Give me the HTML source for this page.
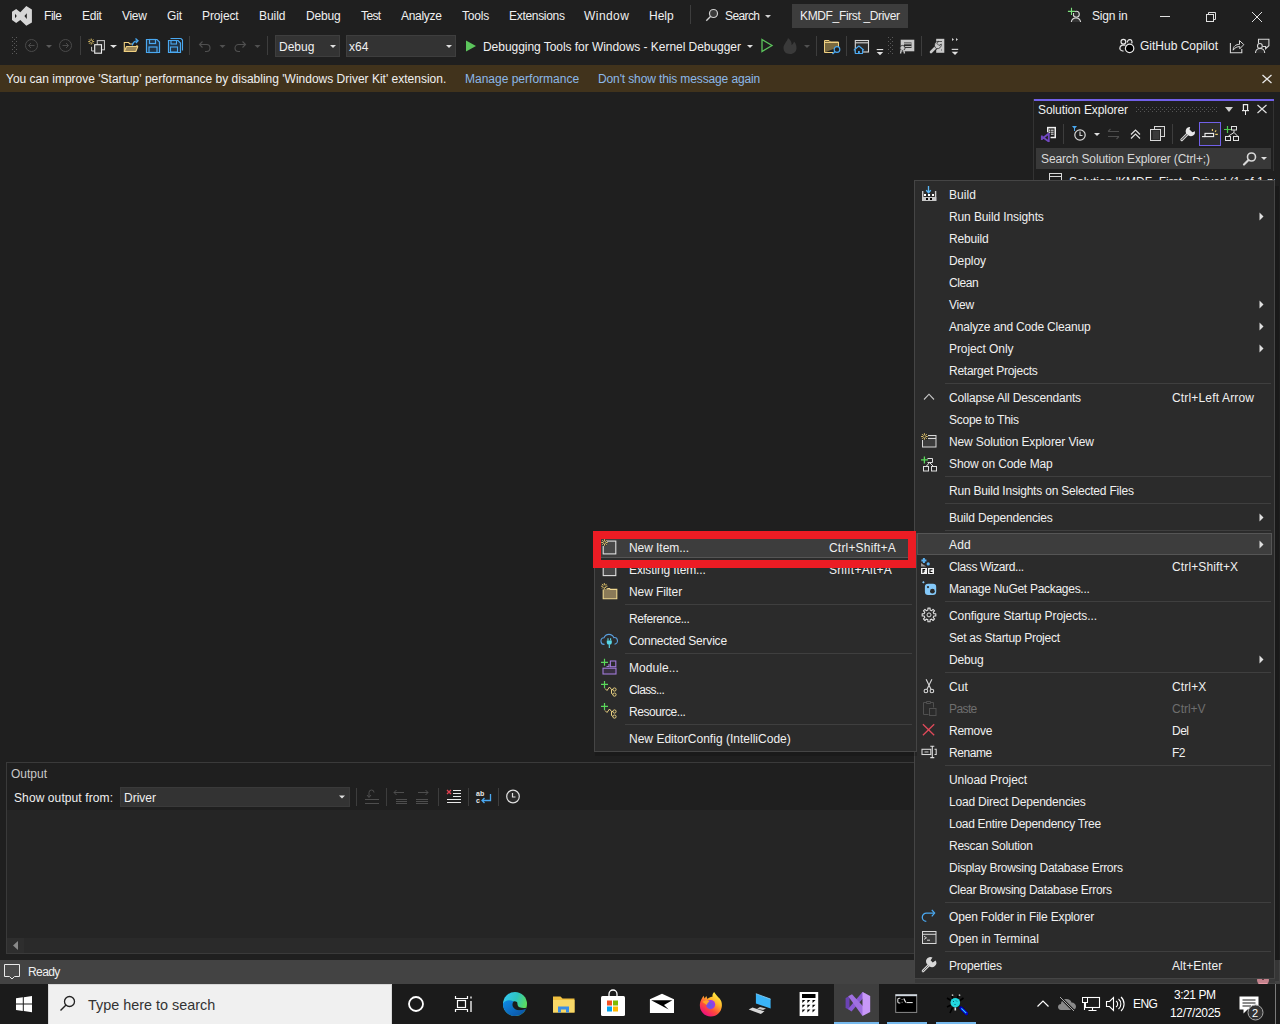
<!DOCTYPE html><html><head><meta charset="utf-8"><style>
*{margin:0;padding:0;box-sizing:border-box}
html,body{width:1280px;height:1024px;overflow:hidden;background:#1f1f1f}
body{position:relative;font-family:"Liberation Sans",sans-serif;font-size:12px;line-height:16px;color:#f0f0f0}
.t{position:absolute;white-space:nowrap;line-height:16px}
.r{position:absolute}
.s{position:absolute;overflow:visible}
</style></head><body><svg class="s" style="left:0px;top:0px;" width="40" height="30" viewBox="0 0 40 30"><path fill="#d6d6d6" fill-rule="evenodd" d="M12 11.7L16.2 9L20.3 12.3L26.3 5.9L31.9 9.4V22.6L26.3 25.8L20.3 19.9L16.2 22.9L12 19.9Z M15 13.8L16.8 16L15 18.2Z M26.8 13.2L24.4 16.1L26.8 19Z"/></svg><div class="t" style="left:44px;top:8px;letter-spacing:-0.448px;">File</div><div class="t" style="left:82px;top:8px;letter-spacing:-0.261px;">Edit</div><div class="t" style="left:122px;top:8px;letter-spacing:-0.300px;">View</div><div class="t" style="left:167px;top:8px;letter-spacing:-0.170px;">Git</div><div class="t" style="left:202px;top:8px;letter-spacing:-0.109px;">Project</div><div class="t" style="left:259px;top:8px;letter-spacing:-0.048px;">Build</div><div class="t" style="left:306px;top:8px;letter-spacing:-0.168px;">Debug</div><div class="t" style="left:361px;top:8px;letter-spacing:-0.600px;">Test</div><div class="t" style="left:401px;top:8px;letter-spacing:-0.300px;">Analyze</div><div class="t" style="left:462px;top:8px;letter-spacing:-0.206px;">Tools</div><div class="t" style="left:509px;top:8px;letter-spacing:-0.312px;">Extensions</div><div class="t" style="left:584px;top:8px;letter-spacing:0.442px;">Window</div><div class="t" style="left:649px;top:8px;letter-spacing:-0.029px;">Help</div><div class="r" style="left:690px;top:5px;width:1px;height:19px;background:#3d3d3d;"></div><svg class="s" style="left:700px;top:5px;" width="24" height="20" viewBox="0 0 24 20"><circle cx="13.5" cy="8.5" r="4" fill="#3a3a3a" stroke="#d0d0d0" stroke-width="1.2"/><path d="M10.7 11.3L6.3 15.7" stroke="#d0d0d0" stroke-width="1.4"/></svg><div class="t" style="left:725px;top:8px;letter-spacing:-0.600px;">Search</div><svg class="s" style="left:760px;top:10px;" width="14" height="10" viewBox="0 0 14 10"><path d="M5 5h6l-3 3z" fill="#d0d0d0"/></svg><div class="r" style="left:792px;top:4px;width:116px;height:24px;background:#3d3d3d;"></div><div class="t" style="left:800px;top:8px;letter-spacing:-0.354px;">KMDF_First _Driver</div><svg class="s" style="left:1064px;top:5px;" width="22" height="22" viewBox="0 0 22 22"><circle cx="12.3" cy="9.3" r="3" fill="#333" stroke="#d8d8d8" stroke-width="1.1"/><path d="M7.3 17A4.7 4.7 0 0 1 16.6 17" fill="#333" stroke="#d8d8d8" stroke-width="1.1"/><path d="M7.5 2.8V10M3.9 6.4H11.1" stroke="#1f1f1f" stroke-width="3"/><path d="M7.5 2.8V10M3.9 6.4H11.1" stroke="#7ee07e" stroke-width="1.1"/></svg><div class="t" style="left:1092px;top:8px;letter-spacing:-0.184px;">Sign in</div><div class="r" style="left:1160px;top:16px;width:10px;height:1px;background:#e0e0e0;"></div><svg class="s" style="left:1204px;top:10px;" width="14" height="14" viewBox="0 0 14 14"><rect x="2.5" y="4.5" width="7" height="7" fill="none" stroke="#e0e0e0"/><path d="M4.5 4.5V2.5H11.5V9.5H9.5" fill="none" stroke="#e0e0e0"/></svg><svg class="s" style="left:1250px;top:10px;" width="14" height="14" viewBox="0 0 14 14"><path d="M2 2L12 12M12 2L2 12" stroke="#e0e0e0" stroke-width="1"/></svg><svg class="s" style="left:0px;top:0px;" width="1280" height="64" viewBox="0 0 1280 64"><rect x="12" y="37" width="1" height="1" fill="#5a5a5a"/><rect x="16" y="37" width="1" height="1" fill="#5a5a5a"/><rect x="12" y="41" width="1" height="1" fill="#5a5a5a"/><rect x="16" y="41" width="1" height="1" fill="#5a5a5a"/><rect x="12" y="45" width="1" height="1" fill="#5a5a5a"/><rect x="16" y="45" width="1" height="1" fill="#5a5a5a"/><rect x="12" y="49" width="1" height="1" fill="#5a5a5a"/><rect x="16" y="49" width="1" height="1" fill="#5a5a5a"/><rect x="12" y="53" width="1" height="1" fill="#5a5a5a"/><rect x="16" y="53" width="1" height="1" fill="#5a5a5a"/><rect x="14" y="39" width="1" height="1" fill="#5a5a5a"/><rect x="14" y="43" width="1" height="1" fill="#5a5a5a"/><rect x="14" y="47" width="1" height="1" fill="#5a5a5a"/><rect x="14" y="51" width="1" height="1" fill="#5a5a5a"/></svg><svg class="s" style="left:24px;top:38px;" width="16" height="16" viewBox="0 0 16 16"><circle cx="7.5" cy="7.5" r="6" fill="none" stroke="#4a4a4a" stroke-width="1"/><path d="M10.5 7.5H4.5M7 5L4.5 7.5L7 10" fill="none" stroke="#4a4a4a"/></svg><svg class="s" style="left:44px;top:42px;" width="10" height="8" viewBox="0 0 10 8"><path d="M2 3h6l-3 3z" fill="#5a5a5a"/></svg><svg class="s" style="left:58px;top:38px;" width="16" height="16" viewBox="0 0 16 16"><circle cx="7.5" cy="7.5" r="6" fill="none" stroke="#4a4a4a" stroke-width="1"/><path d="M4.5 7.5H10.5M8 5L10.5 7.5L8 10" fill="none" stroke="#4a4a4a"/></svg><div class="r" style="left:80px;top:36px;width:1px;height:19px;background:#3d3d3d;"></div><svg class="s" style="left:88px;top:37px;" width="18" height="18" viewBox="0 0 18 18"><rect x="9.25" y="3.6" width="7.2" height="9.2" fill="#2a2a2a" stroke="#c8c8c8" stroke-width="1"/><rect x="6.7" y="7.7" width="6.8" height="8.5" fill="#333" stroke="#f0f0f0" stroke-width="1.1"/><path d="M3.6 9.8V14H6" fill="none" stroke="#c8c8c8" stroke-width="1"/><path d="M0.20 4.60L2.15 4.60M4.25 4.60L6.20 4.60M1.08 2.48L2.46 3.86M3.94 5.34L5.32 6.72M3.20 1.60L3.20 3.55M3.20 5.65L3.20 7.60M5.32 2.48L3.94 3.86M2.46 5.34L1.08 6.72" stroke="#f0d070" stroke-width="0.9"/></svg><svg class="s" style="left:108px;top:42px;" width="10" height="8" viewBox="0 0 10 8"><path d="M2 3h7l-3.5 3z" fill="#e0e0e0"/></svg><svg class="s" style="left:123px;top:37px;" width="18" height="17" viewBox="0 0 18 17"><path d="M1.3 14.5V5.5H5.5L7 7H10" fill="none" stroke="#f0d080" stroke-width="1.1"/><path d="M1.3 14.5L3.5 9.5H14.8L12.8 14.5Z" fill="#9a8658" stroke="#f0d080" stroke-width="1.1" stroke-linejoin="round"/><path d="M9.3 8.5C9.8 5.5 11.5 4 14 3.8" fill="none" stroke="#4aa8f0" stroke-width="1.3"/><path d="M12.5 1.5L15 3.8L12.8 6" fill="none" stroke="#4aa8f0" stroke-width="1.3"/><path d="M14 9.5V8" stroke="#f0d080" stroke-width="1.1"/></svg><svg class="s" style="left:145px;top:38px;" width="16" height="16" viewBox="0 0 16 16"><path d="M1.5 1.5H12l2.5 2.5V14.5H1.5Z" fill="#223344" stroke="#4aa8f0" stroke-width="1.2"/><rect x="4.5" y="1.5" width="6" height="4" fill="none" stroke="#4aa8f0" stroke-width="1.2"/><rect x="4" y="9" width="8" height="5.5" fill="none" stroke="#4aa8f0" stroke-width="1.2"/></svg><svg class="s" style="left:167px;top:37px;" width="17" height="17" viewBox="0 0 17 17"><path d="M3.5 1.5H14l1.5 1.5V13.5" fill="none" stroke="#4aa8f0" stroke-width="1.1"/><path d="M1.5 3.5H11l2.5 2.5V15.5H1.5Z" fill="#223344" stroke="#4aa8f0" stroke-width="1.2"/><rect x="4" y="3.5" width="5.5" height="3.5" fill="none" stroke="#4aa8f0" stroke-width="1.1"/><rect x="3.5" y="10" width="7" height="5" fill="none" stroke="#4aa8f0" stroke-width="1.1"/></svg><div class="r" style="left:189px;top:36px;width:1px;height:19px;background:#3d3d3d;"></div><svg class="s" style="left:197px;top:38px;" width="16" height="16" viewBox="0 0 16 16"><path d="M3 6.5h6.5a3.5 3.5 0 0 1 0 7H8" fill="none" stroke="#505050" stroke-width="1.1"/><path d="M5.5 3.5L2.5 6.5L5.5 9.5" fill="none" stroke="#505050" stroke-width="1.1"/><path d="M8 13.5L12 14" stroke="none"/></svg><svg class="s" style="left:217px;top:42px;" width="10" height="8" viewBox="0 0 10 8"><path d="M2.5 3h6l-3 3z" fill="#505050"/></svg><svg class="s" style="left:232px;top:38px;" width="16" height="16" viewBox="0 0 16 16"><path d="M13 6.5H6.5a3.5 3.5 0 0 0 0 7H8" fill="none" stroke="#505050" stroke-width="1.1"/><path d="M10.5 3.5L13.5 6.5L10.5 9.5" fill="none" stroke="#505050" stroke-width="1.1"/></svg><svg class="s" style="left:252px;top:42px;" width="10" height="8" viewBox="0 0 10 8"><path d="M2.5 3h6l-3 3z" fill="#505050"/></svg><div class="r" style="left:267px;top:36px;width:1px;height:19px;background:#3d3d3d;"></div><div class="r" style="left:275px;top:35px;width:65px;height:22px;background:#333333;border:1px solid #3e3e3e"></div><div class="t" style="left:279px;top:39px;">Debug</div><svg class="s" style="left:326px;top:42px;" width="12" height="8" viewBox="0 0 12 8"><path d="M4 3h6l-3 3z" fill="#e0e0e0"/></svg><div class="r" style="left:346px;top:35px;width:110px;height:22px;background:#333333;border:1px solid #3e3e3e"></div><div class="t" style="left:349px;top:39px;">x64</div><svg class="s" style="left:442px;top:42px;" width="12" height="8" viewBox="0 0 12 8"><path d="M4 3h6l-3 3z" fill="#e0e0e0"/></svg><svg class="s" style="left:464px;top:39px;" width="14" height="14" viewBox="0 0 14 14"><path d="M2 1.5L12 7L2 12.5Z" fill="#5cc55c"/></svg><div class="t" style="left:483px;top:39px;letter-spacing:-0.045px;">Debugging Tools for Windows - Kernel Debugger</div><svg class="s" style="left:744px;top:42px;" width="12" height="8" viewBox="0 0 12 8"><path d="M3 3h6l-3 3z" fill="#e0e0e0"/></svg><svg class="s" style="left:760px;top:38px;" width="14" height="16" viewBox="0 0 14 16"><path d="M2 1.5L12 7.5L2 13.5Z" fill="none" stroke="#5cc55c" stroke-width="1.3"/></svg><svg class="s" style="left:782px;top:37px;" width="16" height="18" viewBox="0 0 16 18"><path d="M8 17C3.5 17 1.5 14 1.5 11C1.5 7 5 5 6 1C9 3 10 6 9.5 8C11 7 12 5.5 12 4.5C14 6.5 14.5 9 14.5 11C14.5 14.5 12 17 8 17Z" fill="#3a3a3a"/></svg><svg class="s" style="left:801px;top:42px;" width="12" height="8" viewBox="0 0 12 8"><path d="M3 3h6l-3 3z" fill="#505050"/></svg><div class="r" style="left:816px;top:36px;width:1px;height:20px;background:#3d3d3d;"></div><svg class="s" style="left:824px;top:39px;" width="18" height="16" viewBox="0 0 18 16"><path d="M0.5 13.5V1.5H5l1.5 1.5H14.5V8" fill="#7a6a40" stroke="#f0d080"/><path d="M0.5 13.5H9" stroke="#f0d080"/><path d="M0.5 3.5H14.5" stroke="#f0d080"/><circle cx="13" cy="10.5" r="2.8" fill="#1f1f1f" stroke="#4aa8f0" stroke-width="1.2"/><path d="M11 12.5L8.5 15" stroke="#4aa8f0" stroke-width="1.5"/></svg><div class="r" style="left:846px;top:36px;width:1px;height:20px;background:#3d3d3d;"></div><svg class="s" style="left:854px;top:39px;" width="16" height="16" viewBox="0 0 16 16"><rect x="1.3" y="1.5" width="13.2" height="11.5" fill="#2a2a2a" stroke="#d8d8d8" stroke-width="1.1"/><path d="M1.3 3.8H14.5" stroke="#d8d8d8" stroke-width="1.1"/><path d="M0.2 11L4.9 7L9.6 11H8.5V14.5H1.3V11Z" fill="#1f1f1f" stroke="#4aa8f0" stroke-width="1.1" stroke-linejoin="round"/><rect x="4" y="12" width="1.8" height="2.5" fill="#4aa8f0"/></svg><svg class="s" style="left:876px;top:48px;" width="8" height="8" viewBox="0 0 8 8"><rect x="0.7" y="1" width="6.5" height="1.1" fill="#e0e0e0"/><path d="M0.7 4H7.2L4 7.2Z" fill="#e0e0e0"/></svg><svg class="s" style="left:0px;top:0px;" width="1280" height="64" viewBox="0 0 1280 64"><rect x="888" y="37" width="1" height="1" fill="#5a5a5a"/><rect x="892" y="37" width="1" height="1" fill="#5a5a5a"/><rect x="888" y="41" width="1" height="1" fill="#5a5a5a"/><rect x="892" y="41" width="1" height="1" fill="#5a5a5a"/><rect x="888" y="45" width="1" height="1" fill="#5a5a5a"/><rect x="892" y="45" width="1" height="1" fill="#5a5a5a"/><rect x="888" y="49" width="1" height="1" fill="#5a5a5a"/><rect x="892" y="49" width="1" height="1" fill="#5a5a5a"/><rect x="888" y="53" width="1" height="1" fill="#5a5a5a"/><rect x="892" y="53" width="1" height="1" fill="#5a5a5a"/><rect x="890" y="39" width="1" height="1" fill="#5a5a5a"/><rect x="890" y="43" width="1" height="1" fill="#5a5a5a"/><rect x="890" y="47" width="1" height="1" fill="#5a5a5a"/><rect x="890" y="51" width="1" height="1" fill="#5a5a5a"/></svg><svg class="s" style="left:899px;top:38px;" width="17" height="17" viewBox="0 0 17 17"><rect x="1.7" y="1.7" width="13.6" height="11.6" fill="#c8c8c8"/><rect x="5" y="4.5" width="7.5" height="5.5" fill="#2a2a2a"/><path d="M5 5.8H12.5M5 8.6H12.5" stroke="#c8c8c8" stroke-width="1"/><circle cx="3.5" cy="10" r="2.6" fill="#c8c8c8" stroke="#1f1f1f" stroke-width="0.8"/><path d="M2.3 12L1.5 15.5M4.7 12L5.5 15.5" stroke="#c8c8c8" stroke-width="1.3"/></svg><div class="r" style="left:921px;top:36px;width:1px;height:20px;background:#3d3d3d;"></div><svg class="s" style="left:928px;top:37px;" width="18" height="18" viewBox="0 0 18 18"><path d="M8.2 1.8H16.3V15.8H8.2Z" fill="#c8c8c8"/><path d="M10 4.5H14M13 13H14" stroke="#555" stroke-width="1"/><path d="M3 15L8.5 9.5" stroke="#1f1f1f" stroke-width="4.5" stroke-linecap="round"/><path d="M3 15L8.5 9.5" stroke="#c8c8c8" stroke-width="2.6" stroke-linecap="round"/><path d="M7.2 10.5A4 4 0 0 1 10.5 4.2L9 6.5L11 8.5L13.3 7A4 4 0 0 1 8.5 11.6Z" fill="#c8c8c8" stroke="#1f1f1f" stroke-width="0.7"/></svg><svg class="s" style="left:950px;top:36px;" width="10" height="20" viewBox="0 0 10 20"><path d="M2 2L4 3.5L2 5ZM6 2L8 3.5L6 5Z" fill="#d0d0d0"/><rect x="1.7" y="12.8" width="6.5" height="1.1" fill="#e0e0e0"/><path d="M1.7 15.8H8.2L5 19Z" fill="#e0e0e0"/></svg><svg class="s" style="left:1117px;top:37px;" width="18" height="18" viewBox="0 0 18 18"><circle cx="6.4" cy="4.8" r="2.4" fill="none" stroke="#e8e8e8" stroke-width="1.2"/><path d="M10.5 5.5A2.3 2.3 0 1 1 14.6 6.3" fill="none" stroke="#e8e8e8" stroke-width="1.2"/><path d="M8.5 8.2H5.5C3.5 8.5 2.2 10.5 3.2 12.5C3.8 13.6 5 14 6.5 14.2" fill="none" stroke="#e8e8e8" stroke-width="1.3"/><circle cx="12.6" cy="11.4" r="4.2" fill="#000" stroke="#e8e8e8" stroke-width="1.2"/></svg><div class="t" style="left:1140px;top:38px;">GitHub Copilot</div><svg class="s" style="left:1228px;top:38px;" width="18" height="17" viewBox="0 0 18 17"><path d="M2.4 5V14.75H13.8V11" fill="none" stroke="#d8d8d8" stroke-width="1.1"/><path d="M5.2 12.2C5.2 8.2 7.8 6.4 11.5 6.4V2.6L15.8 6.6L11.8 10.8V8.6C9 8.6 6.8 9.6 5.2 12.2Z" fill="none" stroke="#d8d8d8" stroke-width="1" stroke-linejoin="round"/></svg><svg class="s" style="left:1253px;top:37px;" width="18" height="18" viewBox="0 0 18 18"><path d="M5.5 6.5V2.3H15.9V8.7L12.6 11.7V9.5H9.5" fill="#2a2a2a" stroke="#d8d8d8" stroke-width="1.1"/><circle cx="6.9" cy="8.9" r="2.4" fill="#1f1f1f" stroke="#d8d8d8" stroke-width="1.1"/><path d="M2.5 16A4.6 4.6 0 0 1 11.7 16" fill="#2a2a2a" stroke="#d8d8d8" stroke-width="1.1"/></svg><div class="r" style="left:0px;top:65px;width:1280px;height:27px;background:#41331c;"></div><div class="t" style="left:6px;top:71px;">You can improve &#x27;Startup&#x27; performance by disabling &#x27;Windows Driver Kit&#x27; extension.</div><div class="t" style="left:465px;top:71px;color:#8cb8e8;">Manage performance</div><div class="t" style="left:598px;top:71px;color:#8cb8e8;letter-spacing:-0.124px;">Don&#x27;t show this message again</div><svg class="s" style="left:1260px;top:73px;" width="14" height="12" viewBox="0 0 14 12"><path d="M2.5 2L11.5 10M11.5 2L2.5 10" stroke="#e8e8e8" stroke-width="1.3"/></svg><div class="r" style="left:1033px;top:99px;width:241px;height:856px;background:#1f1f1f;border-left:1px solid #333;border-bottom:1px solid #333"></div><div class="r" style="left:1273px;top:101px;width:1px;height:70px;background:#333;"></div><div class="r" style="left:1034px;top:99px;width:240px;height:2px;background:#7160e8;"></div><div class="t" style="left:1038px;top:102px;letter-spacing:-0.088px;">Solution Explorer</div><svg class="s" style="left:0px;top:0px;" width="1280" height="200" viewBox="0 0 1280 200"><rect x="1136" y="107" width="1" height="1" fill="#555"/><rect x="1136" y="111" width="1" height="1" fill="#555"/><rect x="1140" y="107" width="1" height="1" fill="#555"/><rect x="1140" y="111" width="1" height="1" fill="#555"/><rect x="1144" y="107" width="1" height="1" fill="#555"/><rect x="1144" y="111" width="1" height="1" fill="#555"/><rect x="1148" y="107" width="1" height="1" fill="#555"/><rect x="1148" y="111" width="1" height="1" fill="#555"/><rect x="1152" y="107" width="1" height="1" fill="#555"/><rect x="1152" y="111" width="1" height="1" fill="#555"/><rect x="1156" y="107" width="1" height="1" fill="#555"/><rect x="1156" y="111" width="1" height="1" fill="#555"/><rect x="1160" y="107" width="1" height="1" fill="#555"/><rect x="1160" y="111" width="1" height="1" fill="#555"/><rect x="1164" y="107" width="1" height="1" fill="#555"/><rect x="1164" y="111" width="1" height="1" fill="#555"/><rect x="1168" y="107" width="1" height="1" fill="#555"/><rect x="1168" y="111" width="1" height="1" fill="#555"/><rect x="1172" y="107" width="1" height="1" fill="#555"/><rect x="1172" y="111" width="1" height="1" fill="#555"/><rect x="1176" y="107" width="1" height="1" fill="#555"/><rect x="1176" y="111" width="1" height="1" fill="#555"/><rect x="1180" y="107" width="1" height="1" fill="#555"/><rect x="1180" y="111" width="1" height="1" fill="#555"/><rect x="1184" y="107" width="1" height="1" fill="#555"/><rect x="1184" y="111" width="1" height="1" fill="#555"/><rect x="1188" y="107" width="1" height="1" fill="#555"/><rect x="1188" y="111" width="1" height="1" fill="#555"/><rect x="1192" y="107" width="1" height="1" fill="#555"/><rect x="1192" y="111" width="1" height="1" fill="#555"/><rect x="1196" y="107" width="1" height="1" fill="#555"/><rect x="1196" y="111" width="1" height="1" fill="#555"/><rect x="1200" y="107" width="1" height="1" fill="#555"/><rect x="1200" y="111" width="1" height="1" fill="#555"/><rect x="1204" y="107" width="1" height="1" fill="#555"/><rect x="1204" y="111" width="1" height="1" fill="#555"/><rect x="1208" y="107" width="1" height="1" fill="#555"/><rect x="1208" y="111" width="1" height="1" fill="#555"/><rect x="1212" y="107" width="1" height="1" fill="#555"/><rect x="1212" y="111" width="1" height="1" fill="#555"/><rect x="1216" y="107" width="1" height="1" fill="#555"/><rect x="1216" y="111" width="1" height="1" fill="#555"/><rect x="1138" y="109" width="1" height="1" fill="#555"/><rect x="1142" y="109" width="1" height="1" fill="#555"/><rect x="1146" y="109" width="1" height="1" fill="#555"/><rect x="1150" y="109" width="1" height="1" fill="#555"/><rect x="1154" y="109" width="1" height="1" fill="#555"/><rect x="1158" y="109" width="1" height="1" fill="#555"/><rect x="1162" y="109" width="1" height="1" fill="#555"/><rect x="1166" y="109" width="1" height="1" fill="#555"/><rect x="1170" y="109" width="1" height="1" fill="#555"/><rect x="1174" y="109" width="1" height="1" fill="#555"/><rect x="1178" y="109" width="1" height="1" fill="#555"/><rect x="1182" y="109" width="1" height="1" fill="#555"/><rect x="1186" y="109" width="1" height="1" fill="#555"/><rect x="1190" y="109" width="1" height="1" fill="#555"/><rect x="1194" y="109" width="1" height="1" fill="#555"/><rect x="1198" y="109" width="1" height="1" fill="#555"/><rect x="1202" y="109" width="1" height="1" fill="#555"/><rect x="1206" y="109" width="1" height="1" fill="#555"/><rect x="1210" y="109" width="1" height="1" fill="#555"/><rect x="1214" y="109" width="1" height="1" fill="#555"/></svg><svg class="s" style="left:1224px;top:106px;" width="10" height="7" viewBox="0 0 10 7"><path d="M1 1h8l-4 5z" fill="#d0d0d0"/></svg><svg class="s" style="left:1241px;top:103px;" width="10" height="13" viewBox="0 0 10 13"><path d="M2.4 7V1.6H6.6V7" fill="none" stroke="#e8e8e8" stroke-width="1.2"/><path d="M1 7.6H8" stroke="#e8e8e8" stroke-width="1.2"/><path d="M4.5 8V12" stroke="#e8e8e8" stroke-width="1"/></svg><svg class="s" style="left:1256px;top:104px;" width="12" height="10" viewBox="0 0 12 10"><path d="M1.5 1L10.5 9M10.5 1L1.5 9" stroke="#e0e0e0" stroke-width="1.2"/></svg><svg class="s" style="left:1040px;top:126px;" width="18" height="17" viewBox="0 0 18 17"><rect x="7.75" y="1.6" width="7.5" height="9.9" fill="#1f1f1f" stroke="#f0f0f0" stroke-width="1.5"/><rect x="9" y="3.6" width="1.2" height="1.2" fill="#f0f0f0"/><rect x="9" y="5.6" width="1.2" height="1.2" fill="#f0f0f0"/><path d="M10.8 4.2H13.6M10.8 6.2H13.6M10.8 8.2H13.6" stroke="#f0f0f0" stroke-width="1"/><path d="M1.8 9.5V14M1.8 10.5L8.8 15.5M1.8 13L8.8 7.5M8.8 7V16" stroke="#1f1f1f" stroke-width="3.5"/><path d="M1.8 9.5V14M1.8 10.5L8.8 15.5M1.8 13L8.8 7.5M8.8 7V16" stroke="#7048c0" stroke-width="1.8"/></svg><div class="r" style="left:1063px;top:124px;width:1px;height:20px;background:#3d3d3d;"></div><svg class="s" style="left:1070px;top:125px;" width="18" height="17" viewBox="0 0 18 17"><path d="M2 1h5l-2.5 3z" fill="#4aa8f0"/><rect x="4" y="3" width="1" height="3" fill="#4aa8f0"/><circle cx="10" cy="10" r="5.2" fill="none" stroke="#d8d8d8" stroke-width="1.2"/><path d="M10 6.5V10.5H12.5" fill="none" stroke="#d8d8d8" stroke-width="1.1"/></svg><svg class="s" style="left:1092px;top:131px;" width="10" height="7" viewBox="0 0 10 7"><path d="M2 2h6l-3 3z" fill="#e0e0e0"/></svg><svg class="s" style="left:1106px;top:128px;" width="16" height="12" viewBox="0 0 16 12"><path d="M2 3.5H13M2 3.5L4.5 1M2 8.5H13M13 8.5L10.5 11" fill="none" stroke="#4e4e4e" stroke-width="1.1"/></svg><svg class="s" style="left:1129px;top:128px;" width="14" height="12" viewBox="0 0 14 12"><path d="M2 6.5L6.5 2L11 6.5M2 10.5L6.5 6L11 10.5" fill="none" stroke="#e0e0e0" stroke-width="1.2"/></svg><svg class="s" style="left:1150px;top:126px;" width="16" height="16" viewBox="0 0 16 16"><rect x="4.5" y="0.5" width="10" height="10" fill="#2a2a2a" stroke="#d8d8d8"/><rect x="0.5" y="3.5" width="10" height="11" fill="#2a2a2a" stroke="#d8d8d8"/><rect x="3" y="5" width="6" height="8" fill="#3a3a3a"/></svg><div class="r" style="left:1172px;top:124px;width:1px;height:20px;background:#3d3d3d;"></div><svg class="s" style="left:1180px;top:126px;" width="17" height="16" viewBox="0 0 17 16"><path d="M1.8 13.7L7.5 8" stroke="#d8d8d8" stroke-width="3" stroke-linecap="round"/><path d="M1.8 13.7L7.5 8" stroke="#1f1f1f" stroke-width="1" stroke-linecap="round"/><path d="M7.6 8.6A4.2 4.2 0 0 1 10.2 0.9L9.5 3.6L12.4 6.3L15 5.2A4.2 4.2 0 0 1 8.6 9.5Z" fill="#e8e8e8"/></svg><div class="r" style="left:1199px;top:122px;width:22px;height:24px;background:#2d2d2d;border:1.3px solid #7160e8"></div><svg class="s" style="left:1200px;top:123px;" width="20" height="22" viewBox="0 0 20 22"><rect x="5" y="10.4" width="8.6" height="3.2" fill="none" stroke="#f0f0f0" stroke-width="1.1"/><path d="M2 13.6H5" stroke="#f0f0f0" stroke-width="1.1"/><path d="M12.4 6V8M15 8.8L16.2 7.4M15.3 11.4H17.8" stroke="#f0d070" stroke-width="1.1"/></svg><svg class="s" style="left:1223px;top:125px;" width="18" height="17" viewBox="0 0 18 17"><path d="M4.5 1v7M1 4.5h7" stroke="#4ec94e" stroke-width="1.2"/><rect x="8.5" y="1.5" width="5" height="3.5" fill="none" stroke="#e0e0e0"/><path d="M11 5v2.5M11 7.5L5.5 11M11 7.5L14.5 11" fill="none" stroke="#e0e0e0"/><rect x="2.5" y="11.5" width="5" height="4" fill="none" stroke="#e0e0e0"/><rect x="10.5" y="11.5" width="5" height="4" fill="none" stroke="#e0e0e0"/></svg><div class="r" style="left:1036px;top:148px;width:235px;height:21px;background:#383838;"></div><div class="t" style="left:1041px;top:151px;color:#d8d8d8;letter-spacing:-0.128px;">Search Solution Explorer (Ctrl+;)</div><svg class="s" style="left:1242px;top:151px;" width="16" height="16" viewBox="0 0 16 16"><circle cx="9.5" cy="6" r="4" fill="none" stroke="#d8d8d8" stroke-width="1.6"/><path d="M6.5 9L2 13.5" stroke="#d8d8d8" stroke-width="2.2" stroke-linecap="round"/></svg><svg class="s" style="left:1259px;top:155px;" width="10" height="7" viewBox="0 0 10 7"><path d="M2 2h6l-3 3z" fill="#e0e0e0"/></svg><svg class="s" style="left:1048px;top:172px;" width="16" height="10" viewBox="0 0 16 10"><rect x="1.5" y="1.5" width="12" height="10" fill="none" stroke="#d8d8d8"/><path d="M1.5 4.5H13.5" stroke="#d8d8d8"/></svg><div class="t" style="left:1069px;top:174px;width:206px;overflow:hidden">Solution &#x27;KMDF_First _Driver&#x27; (1 of 1 project)</div><div class="r" style="left:6px;top:762px;width:1030px;height:192px;background:#1f1f1f;border:1px solid #3a3a3a"></div><div class="t" style="left:11px;top:766px;color:#c8c8c8;">Output</div><div class="t" style="left:14px;top:790px;letter-spacing:0.099px;">Show output from:</div><div class="r" style="left:120px;top:787px;width:230px;height:20px;background:#333333;border:1px solid #3a3a3a"></div><div class="t" style="left:124px;top:790px;">Driver</div><svg class="s" style="left:337px;top:794px;" width="10" height="7" viewBox="0 0 10 7"><path d="M2 1.5h6l-3 3z" fill="#e0e0e0"/></svg><div class="r" style="left:356px;top:788px;width:1px;height:18px;background:#3d3d3d;"></div><div class="r" style="left:386px;top:788px;width:1px;height:18px;background:#3d3d3d;"></div><div class="r" style="left:438px;top:788px;width:1px;height:18px;background:#3d3d3d;"></div><div class="r" style="left:468px;top:788px;width:1px;height:18px;background:#3d3d3d;"></div><div class="r" style="left:498px;top:788px;width:1px;height:18px;background:#3d3d3d;"></div><svg class="s" style="left:363px;top:789px;" width="18" height="16" viewBox="0 0 18 16"><path d="M2 10.5H16M2 14.5H16M6 8V3.5a2.5 2.5 0 0 1 5 0" fill="none" stroke="#4e4e4e" stroke-width="1"/><path d="M4 6L6 8.5L8 6" fill="none" stroke="#4e4e4e"/></svg><svg class="s" style="left:392px;top:789px;" width="18" height="16" viewBox="0 0 18 16"><path d="M4 10.5H15M4 12.5H15M4 14.5H15" stroke="#4e4e4e"/><path d="M2 3.5H12M2 3.5L4.5 1M2 3.5L4.5 6" fill="none" stroke="#4e4e4e"/></svg><svg class="s" style="left:414px;top:789px;" width="18" height="16" viewBox="0 0 18 16"><path d="M2 10.5H14M2 12.5H14M2 14.5H14" stroke="#4e4e4e"/><path d="M4 3.5H14M14 3.5L11.5 1M14 3.5L11.5 6" fill="none" stroke="#4e4e4e"/></svg><svg class="s" style="left:446px;top:789px;" width="17" height="16" viewBox="0 0 17 16"><path d="M1 1L5 5M5 1L1 5" stroke="#e04050" stroke-width="1.3"/><path d="M7 1.5H15M7 4.5H15M7 7.5H15M1 10.5H15M1 13.5H15" stroke="#e8e8e8" stroke-width="1.1"/></svg><svg class="s" style="left:475px;top:790px;" width="18" height="15" viewBox="0 0 18 15"><text x="1" y="6" font-family="Liberation Sans" font-size="7" font-weight="bold" fill="#e8e8e8">ab</text><text x="1" y="12.5" font-family="Liberation Sans" font-size="7" font-weight="bold" fill="#e8e8e8">c</text><path d="M15.5 4V10.5H7M9.5 8L7 10.5L9.5 13" fill="none" stroke="#4aa8f0" stroke-width="1.3"/></svg><svg class="s" style="left:505px;top:789px;" width="17" height="16" viewBox="0 0 17 16"><circle cx="8" cy="7.5" r="6.3" fill="#2a2a2a" stroke="#e0e0e0" stroke-width="1.2"/><path d="M7.5 4V8H10.5" fill="none" stroke="#e0e0e0" stroke-width="1.2"/></svg><div class="r" style="left:7px;top:810px;width:1028px;height:128px;background:#252525;"></div><div class="r" style="left:7px;top:938px;width:1028px;height:15px;background:#2a2a2a;"></div><div class="r" style="left:7px;top:938px;width:17px;height:15px;background:#2e2e2e;"></div><svg class="s" style="left:10px;top:940px;" width="12" height="11" viewBox="0 0 12 11"><path d="M8 1V10L3 5.5Z" fill="#8a8a8a"/></svg><div class="r" style="left:0px;top:960px;width:1280px;height:24px;background:#434343;"></div><svg class="s" style="left:2px;top:962px;" width="20" height="20" viewBox="0 0 20 20"><path d="M2.5 2.5H17.5V14.5H12.5L10 17L7.5 14.5H2.5Z" fill="#4a4a4a" stroke="#e8e8e8" stroke-width="1"/></svg><div class="t" style="left:28px;top:964px;letter-spacing:-0.600px;">Ready</div><svg class="s" style="left:1255px;top:972px;" width="16" height="12" viewBox="0 0 16 12"><circle cx="8" cy="8" r="6" fill="#e89aa6"/><rect x="7.3" y="4" width="1.4" height="4" fill="#502030"/></svg><div class="r" style="left:0px;top:984px;width:1280px;height:40px;background:#1b1b1b;"></div><svg class="s" style="left:14px;top:994px;" width="20" height="20" viewBox="0 0 20 20"><path d="M2 4.2L8.8 3.3V9.6H2Z M9.8 3.2L18 2V9.6H9.8Z M2 10.6H8.8V16.9L2 16Z M9.8 10.6H18V18.2L9.8 17Z" fill="#fff"/></svg><div class="r" style="left:48px;top:984px;width:344px;height:40px;background:#f0f0f0;border:1px solid #d8d8d8;border-bottom:none"></div><svg class="s" style="left:58px;top:994px;" width="20" height="20" viewBox="0 0 20 20"><circle cx="11.5" cy="7.5" r="5" fill="none" stroke="#222" stroke-width="1.3"/><path d="M8 11L2.5 16.5" stroke="#222" stroke-width="1.5"/></svg><div class="t" style="left:88px;top:997px;font-size:14.4px;color:#333;">Type here to search</div><svg class="s" style="left:406px;top:994px;" width="20" height="20" viewBox="0 0 20 20"><circle cx="10" cy="10" r="7" fill="none" stroke="#fff" stroke-width="1.8"/></svg><svg class="s" style="left:454px;top:994px;" width="20" height="20" viewBox="0 0 20 20"><path d="M1.5 2V4.5H13.5V2M1.5 18V15.5H13.5V18" fill="none" stroke="#fff" stroke-width="1.2"/><rect x="3.5" y="6.5" width="8" height="7" fill="none" stroke="#fff" stroke-width="1.2"/><path d="M17 2.5V4.5M17 7V18" stroke="#fff" stroke-width="1.3"/></svg><svg class="s" style="left:502px;top:991px;" width="26" height="26" viewBox="0 0 26 26"><defs><linearGradient id="eg" x1="0" y1="0.2" x2="1" y2="0.6"><stop offset="0" stop-color="#35c8f5"/><stop offset="0.5" stop-color="#2ec4c0"/><stop offset="1" stop-color="#62e050"/></linearGradient><linearGradient id="eb" x1="0" y1="0" x2="1" y2="1"><stop offset="0" stop-color="#0e8ce6"/><stop offset="1" stop-color="#0c4e9e"/></linearGradient></defs><circle cx="13" cy="13" r="12" fill="url(#eg)"/><path d="M9.5 13C9.5 10.5 12.5 9.3 15 11C15.8 12.5 15 15 17.5 16.3C19.5 17.2 22 17.3 24.2 16.8L23.8 19.5L10 20Z" fill="#1b1b1b"/><path d="M1 12.8C2.5 9 8 8.3 11.6 10.6C10.4 11.8 10.2 13.8 10.8 15.5C11.8 18 14.5 19.3 17.5 19.2C20 19.2 22.3 18.6 24 17.8C22.2 22.5 18 25 13 25C6.5 25 1 19.5 1 13Z" fill="url(#eb)"/></svg><svg class="s" style="left:552px;top:994px;" width="24" height="20" viewBox="0 0 24 20"><path d="M1 2.5H8.5L10.5 4.5H22.5V18.5H1Z" fill="#f0c040"/><rect x="1" y="6" width="21.5" height="12.5" fill="#f8d868"/><path d="M6 18.5V12.5H17V18.5H14V15.5H9V18.5Z" fill="#3a8ee8"/></svg><svg class="s" style="left:600px;top:990px;" width="26" height="27" viewBox="0 0 26 27"><path d="M9 6V4a4 4 0 0 1 8 0V6" fill="none" stroke="#fff" stroke-width="1.3"/><rect x="1" y="6" width="24" height="20" rx="1.5" fill="#fff"/><rect x="7" y="10.5" width="5" height="5" fill="#f25022"/><rect x="13" y="10.5" width="5" height="5" fill="#7fba00"/><rect x="7" y="16.5" width="5" height="5" fill="#00a4ef"/><rect x="13" y="16.5" width="5" height="5" fill="#ffb900"/></svg><svg class="s" style="left:648px;top:992px;" width="28" height="22" viewBox="0 0 28 22"><path d="M1.9 7.25L14 1.8L26 7.25V21H1.9Z" fill="#fff"/><path d="M3.2 8.3H24.4L16 12.9L20.7 17.6Z" fill="#000"/></svg><svg class="s" style="left:697px;top:990px;" width="28" height="28" viewBox="0 0 28 28"><defs><linearGradient id="ff" x1="0.85" y1="0.1" x2="0.3" y2="0.95"><stop offset="0" stop-color="#fff044"/><stop offset="0.35" stop-color="#ffb52a"/><stop offset="0.7" stop-color="#ff4a3a"/><stop offset="1" stop-color="#f0147a"/></linearGradient><radialGradient id="fg" cx="0.4" cy="0.6" r="0.7"><stop offset="0" stop-color="#5a60e0"/><stop offset="1" stop-color="#b030e8"/></radialGradient></defs><path d="M13.8 26.4A11.1 11.1 0 0 1 2.9 14C3.3 11 4.8 8.2 6.5 5.7L7.6 8.6L9.3 6L10.5 9C12 7.5 14 6.5 15.5 6.8C15.2 4.8 16 3.2 17.1 2C18.5 4.5 21 6.8 22.6 8.6C24.5 10.8 24.9 13 24.9 15.3A11.1 11.1 0 0 1 13.8 26.4Z" fill="url(#ff)"/><circle cx="13.6" cy="14.6" r="4.6" fill="url(#fg)"/><path d="M5.5 12C7.5 10.5 10 10 12.5 11.5C11 12.5 10 13.5 10 15C8.5 14 7 13 5.5 12Z" fill="#ffa526"/></svg><svg class="s" style="left:746px;top:990px;" width="28" height="26" viewBox="0 0 28 26"><path d="M 9.90 3.70 L 24.60 9.10 V 18.40 L 9.90 13.50 Z" fill="#3ab4f8"/><path d="M 9.90 3.70 L 24.60 9.10" stroke="#8fd8ff" stroke-width="0.8"/><path d="M 14.00 17.00 L 20.00 18.50 L 17.00 20.00 L 11.00 18.80 Z" fill="#c8c8c8"/><path d="M 2.70 19.50 L 6.50 17.60 L 18.50 21.30 L 14.80 24.00 Z" fill="#d8d8d8"/></svg><svg class="s" style="left:798px;top:990px;" width="22" height="28" viewBox="0 0 22 28"><rect x="1.6" y="2" width="18.6" height="24" fill="#fff"/><rect x="4" y="4" width="13.5" height="4" fill="#000"/><path d="M4.3 10.0h3l-3 3z" fill="#000"/><path d="M9.4 10.0h3l-3 3z" fill="#000"/><path d="M14.5 10.0h3l-3 3z" fill="#000"/><path d="M4.3 14.7h3l-3 3z" fill="#000"/><path d="M9.4 14.7h3l-3 3z" fill="#000"/><path d="M14.5 14.7h3l-3 3z" fill="#000"/><path d="M4.3 19.4h3l-3 3z" fill="#000"/><path d="M9.4 19.4h3l-3 3z" fill="#000"/><path d="M14.5 19.4h3l-3 3z" fill="#000"/></svg><div class="r" style="left:834px;top:984px;width:45px;height:40px;background:#3e3e3e;"></div><div class="r" style="left:834px;top:1022px;width:45px;height:2px;background:#76b9ed;"></div><svg class="s" style="left:844px;top:991px;" width="28" height="26" viewBox="0 0 28 26"><path d="M 1.60 7.00 L 5.50 5.00 V 19.00 L 1.60 17.00 Z" fill="#6a42b4"/><path d="M 18.50 1.00 L 22.50 3.20 L 7.50 20.50 L 4.00 18.00 Z" fill="#8a5ad4"/><path d="M 4.20 5.20 L 8.00 3.30 L 22.00 18.50 L 18.50 25.00 Z" fill="#a070e0"/><path d="M 18.50 1.00 L 26.20 5.00 V 21.00 L 18.50 25.00 Z" fill="#c898f8"/></svg><div class="r" style="left:887px;top:1022px;width:40px;height:2px;background:#76b9ed;"></div><svg class="s" style="left:894px;top:993px;" width="24" height="21" viewBox="0 0 24 21"><rect x="1.7" y="1.6" width="21" height="17.8" fill="#000" stroke="#8a8a8a" stroke-width="1"/><rect x="1.5" y="1.4" width="21.5" height="1.8" fill="#d0d8e0"/><path d="M6.3 5.2H5A1.3 1.3 0 0 0 3.8 6.5V8.7A1.3 1.3 0 0 0 5 10H6.3" fill="none" stroke="#ddd" stroke-width="1.1"/><rect x="7.6" y="6" width="1" height="1" fill="#999"/><rect x="7.6" y="8.8" width="1" height="1" fill="#999"/><path d="M9.8 5.5L11.8 9.6" stroke="#eee" stroke-width="1.2"/><rect x="12.5" y="9" width="6.2" height="1.1" fill="#ddd"/></svg><div class="r" style="left:936px;top:1022px;width:40px;height:2px;background:#76b9ed;"></div><svg class="s" style="left:944px;top:991px;" width="26" height="26" viewBox="0 0 26 26"><path d="M7.5 4L9 8M14.5 4L13 8M3 7L7 9.5M19.5 7L16 9.5M3 16L7 14M6 22L8.5 16.5M16 16L20 18.5" stroke="#000" stroke-width="1.6"/><circle cx="8.5" cy="4.2" r="0.9" fill="#bbb"/><circle cx="15.5" cy="4.2" r="0.9" fill="#bbb"/><circle cx="11.3" cy="11.7" r="4.8" fill="#22d8e0"/><path d="M9 10L10 11M12 9.5L13 10.5M10.5 13L11.5 14" stroke="#0a6070" stroke-width="1"/><rect x="10.5" y="16.5" width="1.6" height="3" fill="#ddd"/><path d="M17 17L22.5 22.5" stroke="#0000c8" stroke-width="3.2" stroke-linecap="round"/><path d="M17.3 17.3L22.2 22.2" stroke="#2ad0ff" stroke-width="1.2"/></svg><svg class="s" style="left:1035px;top:997px;" width="16" height="12" viewBox="0 0 16 12"><path d="M2.5 9.5L8 4L13.5 9.5" fill="none" stroke="#fff" stroke-width="1.2"/></svg><svg class="s" style="left:1057px;top:995px;" width="20" height="18" viewBox="0 0 20 18"><path d="M4 15C2 15 1 13.5 1 12C1 10 2.5 9 4 9C4 6 6.5 4 9.5 4C12 4 14 5.5 14.5 7.5C17 7.5 19 9.5 19 11.5C19 13.5 17.5 15 15.5 15Z" fill="#8a8a8a"/><path d="M3 2L17 16" stroke="#1b1b1b" stroke-width="2.5"/><path d="M3 2L17 16" stroke="#aaa" stroke-width="1"/></svg><svg class="s" style="left:1081px;top:996px;" width="20" height="17" viewBox="0 0 20 17"><rect x="4.5" y="1.5" width="14" height="10" fill="none" stroke="#fff" stroke-width="1.1"/><rect x="1.5" y="1.5" width="5" height="5" fill="#1b1b1b" stroke="#fff" stroke-width="1"/><path d="M11.5 11.5V14.5M7.5 14.5H15.5M3.5 6.5V14" stroke="#fff" stroke-width="1.1"/></svg><svg class="s" style="left:1105px;top:996px;" width="20" height="16" viewBox="0 0 20 16"><path d="M1.5 5.5H4.5L8.5 1.5V14.5L4.5 10.5H1.5Z" fill="none" stroke="#fff" stroke-width="1.1"/><path d="M11 5A3.5 3.5 0 0 1 11 11M13.5 3A6.5 6.5 0 0 1 13.5 13M16 1A9.5 9.5 0 0 1 16 15" fill="none" stroke="#fff" stroke-width="1.1"/></svg><div class="t" style="left:1133px;top:996px;color:#fff;letter-spacing:-0.600px;">ENG</div><div class="t" style="left:1174px;top:987px;color:#fff;letter-spacing:-0.450px;">3:21 PM</div><div class="t" style="left:1170px;top:1005px;color:#fff;letter-spacing:-0.338px;">12/7/2025</div><svg class="s" style="left:1237px;top:994px;" width="28" height="28" viewBox="0 0 28 28"><path d="M2.5 2.5H21.5V15.5H10.5L6.5 19.5V15.5H2.5Z" fill="#fff"/><path d="M5.5 6H18.5M5.5 9H18.5M5.5 12H14" stroke="#1b1b1b" stroke-width="1.2"/><circle cx="18.5" cy="18.5" r="7.5" fill="#333" stroke="#aaa" stroke-width="1"/><text x="15" y="22.5" font-family="Liberation Sans" font-size="11" fill="#fff">2</text></svg><div class="r" style="left:1275px;top:984px;width:1px;height:40px;background:#7a7a7a;"></div><div class="r" style="left:1275px;top:186px;width:4px;height:795px;background:rgba(0,0,0,0.18);"></div><div class="r" style="left:915px;top:182px;width:360px;height:801px;background:rgba(0,0,0,0.15);"></div><div class="r" style="left:914px;top:180px;width:361px;height:799px;background:#2b2b2b;border:1px solid #454545"></div><div class="t" style="left:949px;top:187px;letter-spacing:0.052px;">Build</div><svg class="s" style="left:921px;top:186px;" width="16" height="16" viewBox="0 0 16 16"><path d="M7.5 0V6.6M5.2 4.3L7.5 6.8L9.8 4.3" fill="none" stroke="#5ab8f8" stroke-width="1.3"/><rect x="1" y="5" width="1.4" height="10" fill="#c8c8c8"/><rect x="13.9" y="5" width="1.4" height="10" fill="#c8c8c8"/><rect x="1" y="11" width="14.3" height="4" fill="#c8c8c8"/><rect x="3" y="8" width="2" height="2" fill="#fff"/><rect x="7" y="8" width="2" height="2" fill="#fff"/><rect x="11" y="8" width="2" height="2" fill="#fff"/><rect x="5" y="12" width="2" height="2" fill="#000"/><rect x="9" y="12" width="2" height="2" fill="#000"/></svg><div class="t" style="left:949px;top:209px;letter-spacing:-0.109px;">Run Build Insights</div><svg class="s" style="left:1259px;top:212px;" width="6" height="9" viewBox="0 0 6 9"><path d="M0.5 0.5L4.5 4.5L0.5 8.5Z" fill="#e0e0e0"/></svg><div class="t" style="left:949px;top:231px;letter-spacing:-0.185px;">Rebuild</div><div class="t" style="left:949px;top:253px;letter-spacing:-0.073px;">Deploy</div><div class="t" style="left:949px;top:275px;letter-spacing:-0.391px;">Clean</div><div class="t" style="left:949px;top:297px;letter-spacing:-0.200px;">View</div><svg class="s" style="left:1259px;top:300px;" width="6" height="9" viewBox="0 0 6 9"><path d="M0.5 0.5L4.5 4.5L0.5 8.5Z" fill="#e0e0e0"/></svg><div class="t" style="left:949px;top:319px;letter-spacing:-0.193px;">Analyze and Code Cleanup</div><svg class="s" style="left:1259px;top:322px;" width="6" height="9" viewBox="0 0 6 9"><path d="M0.5 0.5L4.5 4.5L0.5 8.5Z" fill="#e0e0e0"/></svg><div class="t" style="left:949px;top:341px;letter-spacing:-0.079px;">Project Only</div><svg class="s" style="left:1259px;top:344px;" width="6" height="9" viewBox="0 0 6 9"><path d="M0.5 0.5L4.5 4.5L0.5 8.5Z" fill="#e0e0e0"/></svg><div class="t" style="left:949px;top:363px;letter-spacing:-0.246px;">Retarget Projects</div><div class="r" style="left:945px;top:383px;width:326px;height:1px;background:#3f3f3f;"></div><div class="t" style="left:949px;top:390px;letter-spacing:-0.175px;">Collapse All Descendants</div><div class="t" style="left:1172px;top:390px;letter-spacing:0.163px;">Ctrl+Left Arrow</div><svg class="s" style="left:921px;top:389px;" width="16" height="16" viewBox="0 0 16 16"><path d="M3 10.5L8 5.2L13 10.5" fill="none" stroke="#c8c8c8" stroke-width="1.1"/></svg><div class="t" style="left:949px;top:412px;letter-spacing:-0.265px;">Scope to This</div><div class="t" style="left:949px;top:434px;letter-spacing:-0.120px;">New Solution Explorer View</div><svg class="s" style="left:921px;top:433px;" width="16" height="16" viewBox="0 0 16 16"><rect x="1.5" y="2.5" width="13.5" height="11.5" fill="#3c3c3c" stroke="#d8d8d8"/><path d="M1.5 5.5H15" stroke="#d8d8d8"/><rect x="0" y="0" width="7" height="7" fill="#2b2b2b"/><path d="M0.10 3.50L2.25 3.50M4.55 3.50L6.70 3.50M1.07 1.17L2.58 2.68M4.22 4.32L5.73 5.83M3.40 0.20L3.40 2.35M3.40 4.65L3.40 6.80M5.73 1.17L4.22 2.68M2.58 4.32L1.07 5.83" stroke="#f0d070" stroke-width="0.9"/></svg><div class="t" style="left:949px;top:456px;letter-spacing:-0.108px;">Show on Code Map</div><svg class="s" style="left:921px;top:455px;" width="16" height="16" viewBox="0 0 16 16"><path d="M3.4 1.4v7M0 4.9h7" stroke="#5ad85a" stroke-width="1.3"/><path d="M6.5 3.5H11.5V7.5H6.5" fill="none" stroke="#e0e0e0"/><path d="M8.5 7.5L5.5 11M8.5 7.5L12 11" fill="none" stroke="#e0e0e0"/><rect x="2.5" y="11.5" width="5" height="4.5" fill="none" stroke="#e0e0e0"/><rect x="10.5" y="11.5" width="5" height="4.5" fill="none" stroke="#e0e0e0"/></svg><div class="r" style="left:945px;top:476px;width:326px;height:1px;background:#3f3f3f;"></div><div class="t" style="left:949px;top:483px;letter-spacing:-0.205px;">Run Build Insights on Selected Files</div><div class="r" style="left:945px;top:503px;width:326px;height:1px;background:#3f3f3f;"></div><div class="t" style="left:949px;top:510px;letter-spacing:-0.175px;">Build Dependencies</div><svg class="s" style="left:1259px;top:513px;" width="6" height="9" viewBox="0 0 6 9"><path d="M0.5 0.5L4.5 4.5L0.5 8.5Z" fill="#e0e0e0"/></svg><div class="r" style="left:945px;top:530px;width:326px;height:1px;background:#3f3f3f;"></div><div class="r" style="left:917px;top:533px;width:355px;height:22px;background:#3d3d3d;border:1px solid #555555"></div><div class="t" style="left:949px;top:537px;letter-spacing:0.172px;">Add</div><svg class="s" style="left:1259px;top:540px;" width="6" height="9" viewBox="0 0 6 9"><path d="M0.5 0.5L4.5 4.5L0.5 8.5Z" fill="#e0e0e0"/></svg><div class="t" style="left:949px;top:559px;letter-spacing:-0.393px;">Class Wizard...</div><div class="t" style="left:1172px;top:559px;letter-spacing:0.127px;">Ctrl+Shift+X</div><svg class="s" style="left:921px;top:558px;" width="16" height="16" viewBox="0 0 16 16"><path d="M2.9 0v5M0.4 2.5h5" stroke="#5ab0f0" stroke-width="2"/><circle cx="7.2" cy="5.9" r="1.6" fill="#5ab0f0"/><path d="M0 5L5 8.6H0Z" fill="#9a9a9a"/><rect x="0" y="10" width="6" height="6" fill="#f4f4f4"/><rect x="7" y="10" width="6" height="6" fill="#f4f4f4"/><path d="M2 15V11.5H4.2M2 13H3.8" fill="none" stroke="#000" stroke-width="1.1"/><path d="M11.5 11.7H9V14.5H11.5" fill="none" stroke="#000" stroke-width="1.1"/></svg><div class="t" style="left:949px;top:581px;letter-spacing:-0.289px;">Manage NuGet Packages...</div><svg class="s" style="left:921px;top:580px;" width="16" height="16" viewBox="0 0 16 16"><path d="M2.4 1L3.7 2.3L2.4 3.6L1.1 2.3Z" fill="#84c8f8"/><rect x="3.9" y="3.7" width="11.3" height="11.3" rx="3.2" fill="#84c8f8"/><circle cx="7" cy="7.1" r="1.1" fill="#2b2b2b"/><circle cx="11.4" cy="11.2" r="2.4" fill="#2b2b2b"/></svg><div class="r" style="left:945px;top:601px;width:326px;height:1px;background:#3f3f3f;"></div><div class="t" style="left:949px;top:608px;letter-spacing:-0.099px;">Configure Startup Projects...</div><svg class="s" style="left:921px;top:607px;" width="16" height="16" viewBox="0 0 16 16"><path d="M12.88 6.81L14.81 6.80L14.81 9.00L12.88 8.99L12.22 10.58L13.59 11.94L12.04 13.49L10.68 12.12L9.09 12.78L9.10 14.71L6.90 14.71L6.91 12.78L5.32 12.12L3.96 13.49L2.41 11.94L3.78 10.58L3.12 8.99L1.19 9.00L1.19 6.80L3.12 6.81L3.78 5.22L2.41 3.86L3.96 2.31L5.32 3.68L6.91 3.02L6.90 1.09L9.10 1.09L9.09 3.02L10.68 3.68L12.04 2.31L13.59 3.86L12.22 5.22Z" fill="none" stroke="#e0e0e0" stroke-width="1.1" stroke-linejoin="round"/><circle cx="8" cy="7.9" r="2" fill="none" stroke="#e0e0e0" stroke-width="1"/></svg><div class="t" style="left:949px;top:630px;letter-spacing:-0.274px;">Set as Startup Project</div><div class="t" style="left:949px;top:652px;letter-spacing:-0.168px;">Debug</div><svg class="s" style="left:1259px;top:655px;" width="6" height="9" viewBox="0 0 6 9"><path d="M0.5 0.5L4.5 4.5L0.5 8.5Z" fill="#e0e0e0"/></svg><div class="r" style="left:945px;top:672px;width:326px;height:1px;background:#3f3f3f;"></div><div class="t" style="left:949px;top:679px;letter-spacing:0.060px;">Cut</div><div class="t" style="left:1172px;top:679px;letter-spacing:0.124px;">Ctrl+X</div><svg class="s" style="left:921px;top:678px;" width="16" height="16" viewBox="0 0 16 16"><path d="M5.1 1.3L10 11.2M10.9 1.3L6 11.2" stroke="#d8d8d8" stroke-width="1.1"/><circle cx="4.9" cy="13" r="1.8" fill="none" stroke="#d8d8d8" stroke-width="1.1"/><circle cx="10.9" cy="13" r="1.8" fill="none" stroke="#d8d8d8" stroke-width="1.1"/></svg><div class="t" style="left:949px;top:701px;color:#6e6e6e;letter-spacing:-0.600px;">Paste</div><div class="t" style="left:1172px;top:701px;color:#6e6e6e;letter-spacing:-0.036px;">Ctrl+V</div><svg class="s" style="left:921px;top:700px;" width="16" height="16" viewBox="0 0 16 16"><path d="M6 2.5H2.5V14.5H7.5" fill="none" stroke="#505050" stroke-width="1"/><path d="M5.5 3.5V1.5H9.5V3.5Z" fill="none" stroke="#505050"/><path d="M9.5 2.5H12.5V7.5" fill="none" stroke="#505050"/><rect x="8.5" y="8.5" width="6.5" height="7" fill="none" stroke="#505050"/></svg><div class="t" style="left:949px;top:723px;letter-spacing:-0.258px;">Remove</div><div class="t" style="left:1172px;top:723px;letter-spacing:-0.506px;">Del</div><svg class="s" style="left:921px;top:722px;" width="16" height="16" viewBox="0 0 16 16"><path d="M1.9 2.2L13.2 13.2M13.2 2.2L1.9 13.2" stroke="#e04a5a" stroke-width="1.3"/></svg><div class="t" style="left:949px;top:745px;letter-spacing:-0.453px;">Rename</div><div class="t" style="left:1172px;top:745px;letter-spacing:-0.600px;">F2</div><svg class="s" style="left:921px;top:744px;" width="16" height="16" viewBox="0 0 16 16"><rect x="1" y="5.3" width="8.8" height="5.2" fill="none" stroke="#d8d8d8" stroke-width="1.1"/><rect x="3.5" y="7.2" width="4" height="1.5" fill="#9a9a9a"/><path d="M11.3 2.3V13.5M9.3 2.2H13.3M9.3 13.6H13.3" stroke="#e0e0e0" stroke-width="1.1"/><path d="M13.5 5.3H15.2V10.5H13.5" fill="none" stroke="#d8d8d8" stroke-width="1.1"/></svg><div class="r" style="left:945px;top:765px;width:326px;height:1px;background:#3f3f3f;"></div><div class="t" style="left:949px;top:772px;letter-spacing:-0.048px;">Unload Project</div><div class="t" style="left:949px;top:794px;letter-spacing:-0.203px;">Load Direct Dependencies</div><div class="t" style="left:949px;top:816px;letter-spacing:-0.284px;">Load Entire Dependency Tree</div><div class="t" style="left:949px;top:838px;letter-spacing:-0.251px;">Rescan Solution</div><div class="t" style="left:949px;top:860px;letter-spacing:-0.283px;">Display Browsing Database Errors</div><div class="t" style="left:949px;top:882px;letter-spacing:-0.314px;">Clear Browsing Database Errors</div><div class="r" style="left:945px;top:902px;width:326px;height:1px;background:#3f3f3f;"></div><div class="t" style="left:949px;top:909px;letter-spacing:-0.182px;">Open Folder in File Explorer</div><svg class="s" style="left:921px;top:908px;" width="16" height="16" viewBox="0 0 16 16"><path d="M5.3 13.4A4 4 0 0 1 5.5 5.2H13" fill="none" stroke="#4aa8f0" stroke-width="1.3"/><path d="M10.8 1.9L13.6 5.1L10.8 8.4" fill="none" stroke="#4aa8f0" stroke-width="1.3"/></svg><div class="t" style="left:949px;top:931px;letter-spacing:-0.042px;">Open in Terminal</div><svg class="s" style="left:921px;top:930px;" width="16" height="16" viewBox="0 0 16 16"><rect x="1.5" y="1.5" width="13.5" height="12" fill="#3a3a3a" stroke="#d8d8d8"/><path d="M1.5 4.3H15" stroke="#d8d8d8"/><path d="M3 6.3L5.5 7.8L3 9.4" fill="none" stroke="#d8d8d8" stroke-width="0.9"/><path d="M6 10.2H9" stroke="#d8d8d8"/></svg><div class="r" style="left:945px;top:951px;width:326px;height:1px;background:#3f3f3f;"></div><div class="t" style="left:949px;top:958px;letter-spacing:-0.200px;">Properties</div><div class="t" style="left:1172px;top:958px;letter-spacing:0.062px;">Alt+Enter</div><svg class="s" style="left:921px;top:957px;" width="16" height="16" viewBox="0 0 16 16"><path d="M2 14L8.5 7.5" stroke="#d8d8d8" stroke-width="2.6" stroke-linecap="round"/><path d="M2 14L8.5 7.5" stroke="#4a4a4a" stroke-width="0.8" stroke-linecap="round"/><path d="M7.2 8.2A4.3 4.3 0 0 1 11.5 0.6L9.6 3.3L11.7 5.4L14.6 3.5A4.3 4.3 0 0 1 8.3 9.2Z" fill="#d8d8d8"/></svg><div class="r" style="left:595px;top:535px;width:322px;height:221px;background:rgba(0,0,0,0.15);"></div><div class="r" style="left:594px;top:533px;width:323px;height:219px;background:#2b2b2b;border:1px solid #454545"></div><div class="r" style="left:597px;top:536px;width:317px;height:22px;background:#3d3d3d;border:1px solid #555555"></div><div class="t" style="left:629px;top:540px;letter-spacing:-0.060px;">New Item...</div><div class="t" style="left:829px;top:540px;letter-spacing:0.190px;">Ctrl+Shift+A</div><svg class="s" style="left:601px;top:539px;" width="16" height="16" viewBox="0 0 16 16"><rect x="2.2" y="2.1" width="12.6" height="12.8" fill="#484848" stroke="#e0e0e0" stroke-width="1.1"/><rect x="0" y="0" width="6" height="7" fill="#3d3d3d"/><path d="M0.30 3.50L2.38 3.50M4.62 3.50L6.70 3.50M1.24 1.24L2.71 2.71M4.29 4.29L5.76 5.76M3.50 0.30L3.50 2.38M3.50 4.62L3.50 6.70M5.76 1.24L4.29 2.71M2.71 4.29L1.24 5.76" stroke="#f0d070" stroke-width="0.9"/></svg><div class="t" style="left:629px;top:562px;letter-spacing:-0.121px;">Existing Item...</div><div class="t" style="left:829px;top:562px;letter-spacing:0.275px;">Shift+Alt+A</div><svg class="s" style="left:601px;top:561px;" width="16" height="16" viewBox="0 0 16 16"><rect x="2.2" y="2.1" width="12.6" height="12.5" fill="#484848" stroke="#e0e0e0" stroke-width="1.1"/></svg><div class="t" style="left:629px;top:584px;letter-spacing:-0.091px;">New Filter</div><svg class="s" style="left:601px;top:583px;" width="16" height="16" viewBox="0 0 16 16"><path d="M2.2 15.7V6.4H5.5L7 5.6H8.6L9.2 6.4H15.8V15.7Z" fill="#8a7a58" stroke="#f0d890" stroke-width="1.1"/><rect x="0" y="0" width="6" height="6.5" fill="#2b2b2b"/><path d="M0.10 3.20L2.18 3.20M4.42 3.20L6.50 3.20M1.04 0.94L2.51 2.41M4.09 3.99L5.56 5.46M3.30 0.00L3.30 2.08M3.30 4.32L3.30 6.40M5.56 0.94L4.09 2.41M2.51 3.99L1.04 5.46" stroke="#f0d070" stroke-width="0.9"/></svg><div class="r" style="left:625px;top:604px;width:287px;height:1px;background:#3f3f3f;"></div><div class="t" style="left:629px;top:611px;letter-spacing:-0.408px;">Reference...</div><div class="t" style="left:629px;top:633px;letter-spacing:-0.207px;">Connected Service</div><svg class="s" style="left:601px;top:632px;" width="16" height="16" viewBox="0 0 16 16"><path d="M3.5 12.4A3.3 3.3 0 0 1 3 5.8A5.3 5.3 0 0 1 12.8 5.6A3.2 3.2 0 0 1 13.5 12.2" fill="none" stroke="#5aa0e0" stroke-width="1.1"/><path d="M5.8 8.5H10.8V10.3A2.5 2.5 0 0 1 5.8 10.3Z" fill="#58d8e8"/><path d="M7 6.3V8.5M9.6 6.3V8.5M8.3 12.5V16" stroke="#58d8e8" stroke-width="1.1"/></svg><div class="r" style="left:625px;top:653px;width:287px;height:1px;background:#3f3f3f;"></div><div class="t" style="left:629px;top:660px;letter-spacing:0.053px;">Module...</div><svg class="s" style="left:601px;top:659px;" width="16" height="16" viewBox="0 0 16 16"><path d="M3.5 -0.2v7M0 3.3h7" stroke="#5ad85a" stroke-width="1.2"/><rect x="9.4" y="2" width="5.4" height="5.7" fill="none" stroke="#a07ad8" stroke-width="1.1"/><path d="M5.5 7.5H8V5" fill="none" stroke="#a07ad8" stroke-width="1.1"/><rect x="2" y="9.2" width="13" height="5.8" fill="#383040" stroke="#a07ad8" stroke-width="1.1"/></svg><div class="t" style="left:629px;top:682px;letter-spacing:-0.600px;">Class...</div><svg class="s" style="left:601px;top:681px;" width="16" height="16" viewBox="0 0 16 16"><path d="M3.5 -0.1v7M0 3.4h7" stroke="#5ad85a" stroke-width="1.2"/><path d="M4 7.5L6 9.5L8.5 6" fill="none" stroke="#e8d080" stroke-width="1"/><path d="M8.5 6L10.5 8.5V12.5L12 13.5M10.5 8.5H12" fill="none" stroke="#e8d080" stroke-width="1"/><circle cx="13.5" cy="8.5" r="1.6" fill="none" stroke="#e8d080" stroke-width="1"/><circle cx="13.5" cy="13.6" r="1.6" fill="none" stroke="#e8d080" stroke-width="1"/></svg><div class="t" style="left:629px;top:704px;letter-spacing:-0.448px;">Resource...</div><svg class="s" style="left:601px;top:703px;" width="16" height="16" viewBox="0 0 16 16"><path d="M3.5 -0.1v7M0 3.4h7" stroke="#5ad85a" stroke-width="1.2"/><path d="M4 7.5L6 9.5L8.5 6" fill="none" stroke="#e8d080" stroke-width="1"/><path d="M8.5 6L10.5 8.5V12.5L12 13.5M10.5 8.5H12" fill="none" stroke="#e8d080" stroke-width="1"/><circle cx="13.5" cy="8.5" r="1.6" fill="none" stroke="#e8d080" stroke-width="1"/><circle cx="13.5" cy="13.6" r="1.6" fill="none" stroke="#e8d080" stroke-width="1"/></svg><div class="r" style="left:625px;top:724px;width:287px;height:1px;background:#3f3f3f;"></div><div class="t" style="left:629px;top:731px;letter-spacing:0.012px;">New EditorConfig (IntelliCode)</div><div class="r" style="left:593px;top:531px;width:323px;height:37px;background:transparent;border:8px solid #ec1c24"></div></body></html>
